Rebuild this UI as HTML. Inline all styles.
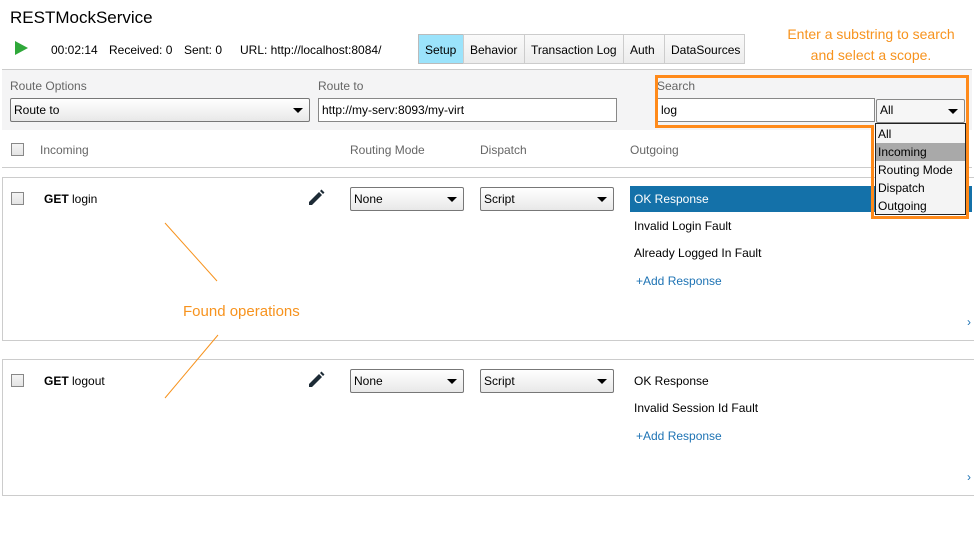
<!DOCTYPE html>
<html><head><style>
*{box-sizing:border-box;margin:0;padding:0}
body{width:979px;height:543px;background:#fff;font-family:"Liberation Sans",sans-serif;font-size:12px;color:#000;position:relative;overflow:hidden}
.a{position:absolute;white-space:nowrap}
.g{color:#666}
.sel{position:absolute;height:24px;border:1px solid #777;border-radius:2px;background:linear-gradient(#fff,#e8e8e8);padding:4px 3px;font-size:12px}
.sel:after{content:"";position:absolute;right:6px;top:9px;border-left:5px solid transparent;border-right:5px solid transparent;border-top:5px solid #000}
.inp{position:absolute;height:24px;border:1px solid #888;background:#fff;padding:4px 3px}
.cb{position:absolute;width:13px;height:13px;border:1px solid #888;background:linear-gradient(#f4f4f4,#e4e4e4)}
.tab{position:absolute;top:34px;height:30px;border:1px solid #ccc;background:linear-gradient(#fafafa,#ececec);padding:8px 6px 0}
.box{position:absolute;left:2px;width:972px;border:1px solid #ccc;border-right:none}
.or{color:#f7931e}
.blue{color:#1e73b4}
</style></head><body>
<div class="a" style="left:10px;top:8px;font-size:17px">RESTMockService</div>
<div class="a" style="left:15px;top:41px;width:0;height:0;border-top:7px solid transparent;border-bottom:7px solid transparent;border-left:13px solid #2fa83a"></div>
<div class="a" style="left:51px;top:43px">00:02:14</div>
<div class="a" style="left:109px;top:43px">Received: 0</div>
<div class="a" style="left:184px;top:43px">Sent: 0</div>
<div class="a" style="left:240px;top:43px">URL: http://localhost:8084/</div>
<div class="tab" style="left:418px;width:46px;background:#9be3fb;border-color:#bbb">Setup</div>
<div class="tab" style="left:463px;width:62px">Behavior</div>
<div class="tab" style="left:524px;width:100px">Transaction Log</div>
<div class="tab" style="left:623px;width:42px">Auth</div>
<div class="tab" style="left:664px;width:81px">DataSources</div>
<div class="a or" style="left:776px;top:24px;font-size:14px;text-align:center;line-height:21px;width:190px">Enter a substring to search<br>and select a scope.</div>
<div class="a" style="left:2px;top:69px;width:970px;height:61px;background:#f4f4f5;border-top:1px solid #ccc"></div>
<div class="a g" style="left:10px;top:79px">Route Options</div>
<div class="sel" style="left:10px;top:98px;width:300px">Route to</div>
<div class="a g" style="left:318px;top:79px">Route to</div>
<div class="inp" style="left:318px;top:98px;width:299px">http://my-serv:8093/my-virt</div>
<div class="a g" style="left:657px;top:79px">Search</div>
<div class="inp" style="left:657px;top:98px;width:218px">log</div>
<div class="sel" style="left:876px;top:99px;width:89px;background:#f6f6f6;border-color:#888;padding-top:3px">All</div>
<div class="cb" style="left:11px;top:143px"></div>
<div class="a g" style="left:40px;top:143px">Incoming</div>
<div class="a g" style="left:350px;top:143px">Routing Mode</div>
<div class="a g" style="left:480px;top:143px">Dispatch</div>
<div class="a g" style="left:630px;top:143px">Outgoing</div>
<div class="a" style="left:2px;top:167px;width:970px;border-top:1px solid #ccc"></div>
<div class="box" style="top:177px;height:164px"></div>
<div class="box" style="top:359px;height:137px"></div>
<div class="cb" style="left:11px;top:192px"></div>
<div class="a" style="left:44px;top:192px"><b>GET</b> login</div>
<svg class="a" style="left:307px;top:189px" width="18" height="18" viewBox="0 0 18 18"><path d="M2 13L12 3L15 6L5 16H2Z M13 2L14.5 0.5L17.5 3.5L16 5Z" fill="#1d2b36"/></svg>
<div class="sel" style="left:350px;top:187px;width:114px">None</div>
<div class="sel" style="left:480px;top:187px;width:134px">Script</div>
<div class="a" style="left:630px;top:186px;width:342px;height:26px;background:#1471a9;color:#fff;padding:6px 4px">OK Response</div>
<div class="a" style="left:634px;top:219px">Invalid Login Fault</div>
<div class="a" style="left:634px;top:246px">Already Logged In Fault</div>
<div class="a blue" style="left:636px;top:274px">+Add Response</div>
<div class="a blue" style="left:967px;top:315px">›</div>
<div class="a or" style="left:183px;top:303px;font-size:15px">Found operations</div>
<div class="cb" style="left:11px;top:374px"></div>
<div class="a" style="left:44px;top:374px"><b>GET</b> logout</div>
<svg class="a" style="left:307px;top:371px" width="18" height="18" viewBox="0 0 18 18"><path d="M2 13L12 3L15 6L5 16H2Z M13 2L14.5 0.5L17.5 3.5L16 5Z" fill="#1d2b36"/></svg>
<div class="sel" style="left:350px;top:369px;width:114px">None</div>
<div class="sel" style="left:480px;top:369px;width:134px">Script</div>
<div class="a" style="left:634px;top:374px">OK Response</div>
<div class="a" style="left:634px;top:401px">Invalid Session Id Fault</div>
<div class="a blue" style="left:636px;top:429px">+Add Response</div>
<div class="a blue" style="left:967px;top:470px">›</div>
<div class="a" style="left:875px;top:123px;width:91px;height:92px;border:1px solid #222;background:#f4f4f4;line-height:18px;padding-top:1px;z-index:5">
<div style="padding-left:2px">All</div><div style="padding-left:2px;background:#a9a9a9">Incoming</div><div style="padding-left:2px">Routing Mode</div><div style="padding-left:2px">Dispatch</div><div style="padding-left:2px">Outgoing</div></div>
<svg class="a" style="left:0;top:0;z-index:6" width="979" height="543"><path d="M656.5 76.5H967.5V217.5H872.5V126.5H656.5Z" fill="none" stroke="#ff8a1a" stroke-width="3"/>
<path d="M165 223L217 281M165 398L218 335" stroke="#f7931e" stroke-width="1"/></svg>
</body></html>
